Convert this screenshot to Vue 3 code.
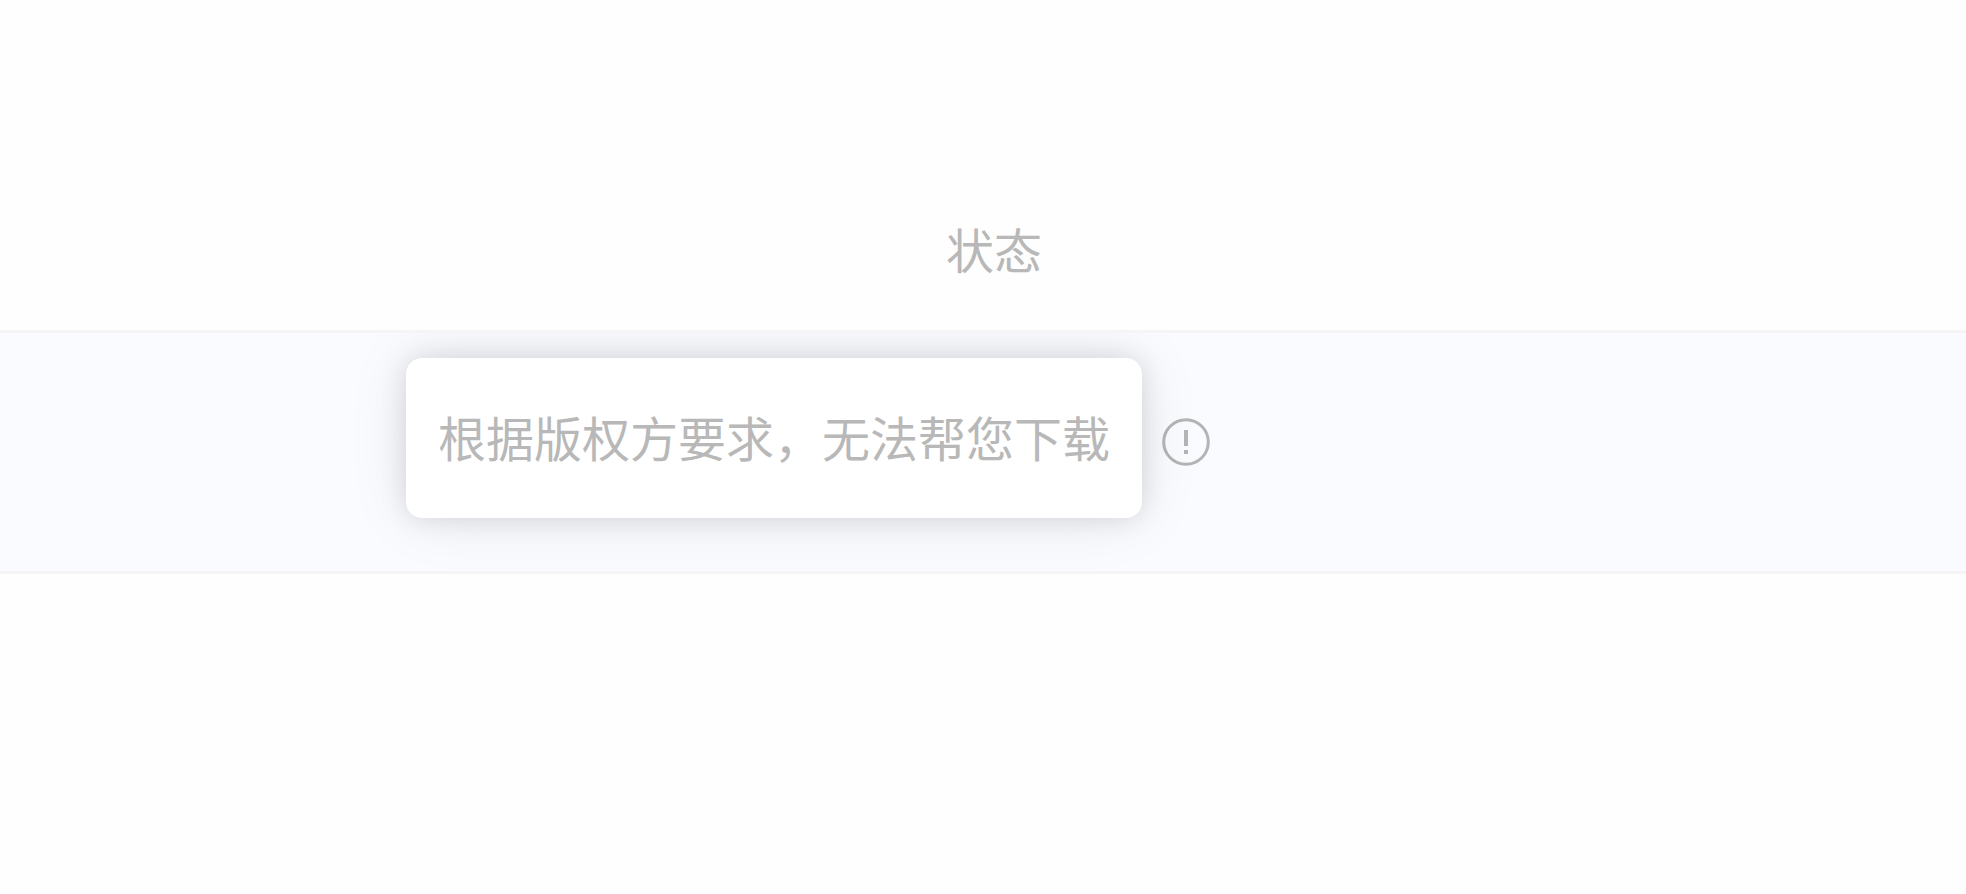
<script setup>
const column = '状态'
const message = '根据版权方要求，无法帮您下载'
</script>

<template>
  <table class="table">
    <thead>
      <tr>
        <th scope="col">{{ column }}</th>
      </tr>
    </thead>
    <tbody>
      <tr>
        <td>
          <div class="cell">
            <button class="info" type="button" aria-label="!" aria-describedby="reason">
              <svg viewBox="0 0 48 48" aria-hidden="true">
                <circle cx="24" cy="24" r="22.3" fill="none" stroke="currentColor" stroke-width="3" />
                <rect x="22" y="12" width="4" height="16" fill="currentColor" />
                <rect x="22" y="32" width="4" height="4" fill="currentColor" />
              </svg>
              <span id="reason" class="tip" role="tooltip">{{ message }}</span>
            </button>
          </div>
        </td>
      </tr>
    </tbody>
  </table>
</template>

<style>
body {
  background: #fefefe;
}
</style>

<style scoped>
.table {
  width: 100%;
  border-spacing: 0;
  font-family: "Noto Sans CJK SC", sans-serif;
  font-size: 48px;
  line-height: 64px;
  color: #b8b8b8;
}

th {
  padding: 216px 0 50px 22px;
  font-weight: 400;
  text-align: center;
}

td {
  padding: 0;
  border-top: 3px solid #f5f5f7;
  border-bottom: 3px solid #f5f5f7;
  background: #fafbff;
}

.cell {
  display: flex;
  justify-content: center;
  padding: 85px 0 105px 406px;
  overflow: hidden;
}

.info {
  position: relative;
  width: 48px;
  height: 48px;
  padding: 0;
  border: 0;
  background: none;
  font: inherit;
  color: inherit;
}

.info svg {
  display: block;
  width: 48px;
  height: 48px;
  color: #b4b4b4;
}

.tip {
  position: absolute;
  top: -60px;
  right: 68px;
  padding: 46px 32px 50px;
  border-radius: 16px;
  background: #fff;
  box-shadow: 0 0 28px rgba(0, 0, 0, 0.12), 0 0 64px rgba(0, 0, 0, 0.08);
  white-space: nowrap;
}
</style>
